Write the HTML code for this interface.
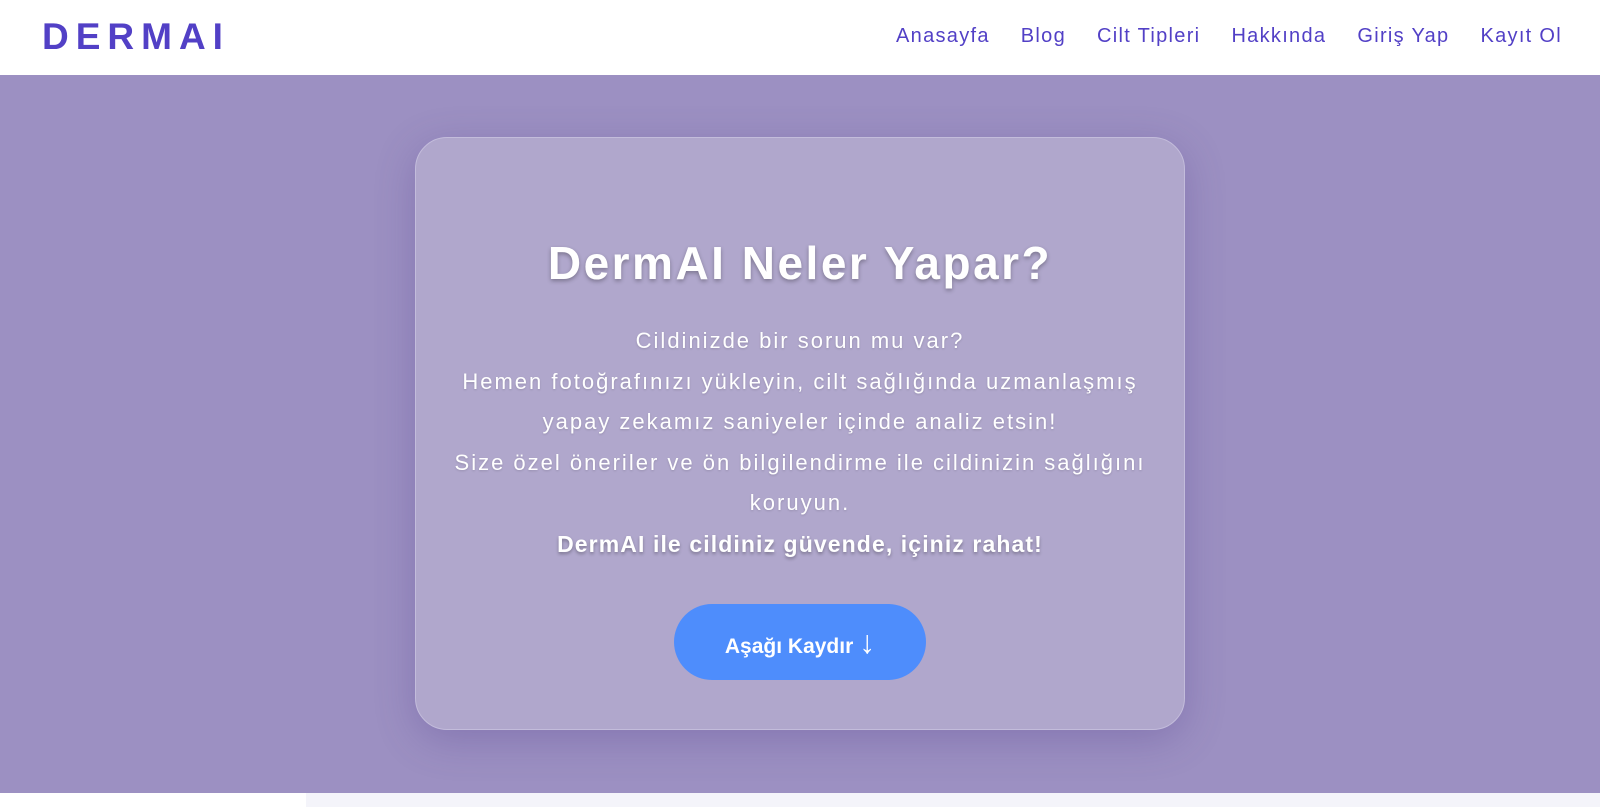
<!DOCTYPE html>
<html><head><meta charset="utf-8"><style>
*{margin:0;padding:0;box-sizing:border-box}
body{width:1600px;height:807px;overflow:hidden;font-family:"Liberation Sans",sans-serif;background:#fff;position:relative}
.nav{height:75px;background:#fff;position:relative}
.logo{position:absolute;left:42px;top:16px;font-size:37px;font-weight:bold;color:#5240c6;letter-spacing:7px}
.links{position:absolute;right:38px;top:25px;display:flex;gap:31px;font-size:20px;color:#5240c6;letter-spacing:1.3px}
.hero{position:absolute;top:75px;left:0;width:1600px;height:718px;background:#9c90c2}
.card{position:absolute;left:415px;top:62px;width:770px;height:593px;border-radius:32px;background:#b0a7cc;border:1px solid #c3bcdb;box-shadow:0 10px 40px rgba(80,60,140,.3);text-align:center;color:#fff}
h1{margin-top:98px;font-size:46px;font-weight:bold;text-shadow:0 2px 4px rgba(0,0,0,.3);letter-spacing:2.5px}
.p{margin-top:31px;font-size:22px;line-height:40.5px;letter-spacing:2px;text-shadow:0 1px 2px rgba(0,0,0,.15)}
.p b{font-size:23px;letter-spacing:1.1px;text-shadow:0 2px 3px rgba(0,0,0,.3)}
.btn{position:absolute;left:258px;top:466px;width:252px;height:76px;border-radius:38px;background:#4e8dfc;font-size:21px;font-weight:bold;line-height:76px}
.bot{position:absolute;top:793px;left:306px;width:1294px;height:14px;background:#f4f4fa}
</style></head><body>
<div class="nav"><div class="logo">DERMAI</div>
<div class="links"><span>Anasayfa</span><span>Blog</span><span>Cilt Tipleri</span><span>Hakkında</span><span>Giriş Yap</span><span>Kayıt Ol</span></div></div>
<div class="hero"><div class="card">
<h1>DermAI Neler Yapar?</h1>
<div class="p">Cildinizde bir sorun mu var?<br>Hemen fotoğrafınızı yükleyin, cilt sağlığında uzmanlaşmış<br>yapay zekamız saniyeler içinde analiz etsin!<br>Size özel öneriler ve ön bilgilendirme ile cildinizin sağlığını<br>koruyun.<br><b>DermAI ile cildiniz güvende, içiniz rahat!</b></div>
<div class="btn">Aşağı Kaydır <span style="font-size:32px;font-weight:normal">↓</span></div>
</div></div>
<div class="bot"></div>
</body></html>
